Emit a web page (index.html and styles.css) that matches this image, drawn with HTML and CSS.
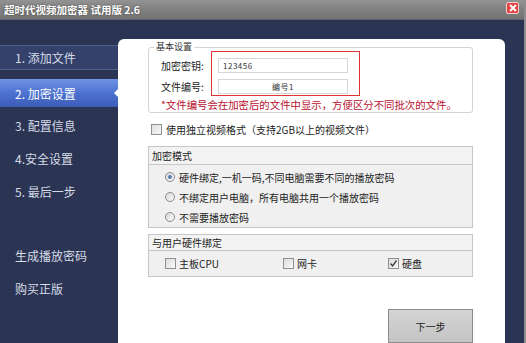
FILE: index.html
```html
<!DOCTYPE html>
<html>
  <head>
    <meta charset="utf-8" />
    <title>超时代视频加密器 试用版 2.6</title>
    <link rel="stylesheet" href="styles.css">
  </head>
  <body>
    <div class="window">
      <div class="titlebar">
        <span class="title">超时代视频加密器 试用版 2.6</span>
        <span class="close">
          <svg width="8" height="8" viewBox="0 0 8 8">
            <path d="M1 1 L7 7 M7 1 L1 7" stroke="#fff" stroke-width="2" />
          </svg>
        </span>
      </div>

      <div class="main">
        <div class="sidebar">
          <div class="nav-item band">1. 添加文件</div>
          <div class="nav-item active">2. 加密设置</div>
          <div class="nav-item step">3. 配置信息</div>
          <div class="nav-item step">4.安全设置</div>
          <div class="nav-item step">5. 最后一步</div>
          <div class="nav-item extra">生成播放密码</div>
          <div class="nav-item extra">购买正版</div>
        </div>

        <div class="panel">
          <div class="content">
            <div class="basic">
              <span class="legend">基本设置</span>
              <div class="key-row">
                <div class="labels">
                  <span>加密密钥:</span>
                  <span>文件编号:</span>
                </div>
                <div class="redbox">
                  <div class="field">123456</div>
                  <div class="field center">编号1</div>
                </div>
              </div>
              <div class="note">*文件编号会在加密后的文件中显示，方便区分不同批次的文件。</div>
            </div>

            <div class="check-line">
              <span class="checkbox"></span>
              <span>使用独立视频格式（支持2GB以上的视频文件）</span>
            </div>

            <div class="group mode">
              <div class="group-head">加密模式</div>
              <div class="group-body">
                <div class="radio-row"><span class="radio on"></span>硬件绑定,一机一码,不同电脑需要不同的播放密码</div>
                <div class="radio-row"><span class="radio"></span>不绑定用户电脑，所有电脑共用一个播放密码</div>
                <div class="radio-row"><span class="radio"></span>不需要播放密码</div>
              </div>
            </div>

            <div class="group bind">
              <div class="group-head">与用户硬件绑定</div>
              <div class="group-body hw">
                <div class="hw-item"><span class="checkbox"></span>主板CPU</div>
                <div class="hw-item"><span class="checkbox"></span>网卡</div>
                <div class="hw-item">
                  <span class="checkbox">
                    <svg width="9" height="9" viewBox="0 0 9 9">
                      <path d="M1.5 4.5 L3.6 7 L7.5 1.5" fill="none" stroke="#3a3a3a" stroke-width="1.3" />
                    </svg>
                  </span>硬盘
                </div>
              </div>
            </div>

            <button class="next-button">下一步</button>
          </div>
        </div>
      </div>
    </div>
  </body>
</html>
```

FILE: styles.css
```css
body {
  margin: 0;
  width: 526px;
  height: 343px;
  overflow: hidden;
  font-family: "Noto Sans CJK SC", "Noto Sans", sans-serif;
  background-color: #2b3553;
}
.window {
  display: flex;
  flex-direction: column;
  height: 343px;
  border-right: 2px solid #8e8e8e;
}
.titlebar {
  display: flex;
  justify-content: space-between;
  align-items: center;
  height: 22px;
  padding: 0 5px 0 4px;
  background-image: linear-gradient(to bottom, #939393 0%, #7d7d7d 60%, #747474 100%);
  border-bottom: 1px solid #5e6270;
}
.title {
  color: #fff;
  font-size: 10.5px;
  font-weight: bold;
  text-shadow: 0 0 2px rgba(0, 0, 0, 0.5);
}
.close {
  display: flex;
  flex: none;
  align-items: center;
  justify-content: center;
  width: 11px;
  height: 10px;
  margin-top: -3px;
  background-color: #e24444;
  border: 1px solid #f8d0d0;
  border-radius: 2px;
}
.main {
  display: flex;
  flex: 1;
}
.sidebar {
  display: flex;
  flex-direction: column;
  width: 118px;
  padding-top: 25px;
}
.nav-item {
  display: flex;
  align-items: center;
  padding-left: 15px;
  color: #d6dbe8;
  font-size: 12px;
  white-space: nowrap;
}
.band {
  height: 23px;
  background-color: #34416a;
  border-top: 1px solid #4f5f8c;
  border-bottom: 1px solid #4f5f8c;
}
.active {
  position: relative;
  height: 28px;
  margin-top: 9px;
  color: #fff;
  background-image: linear-gradient(to bottom, #6f93e4 0%, #4d72d0 50%, #3c5cb8 100%);
}
.active:after {
  content: "";
  position: absolute;
  right: 0;
  top: 10px;
  border-top: 4px solid transparent;
  border-bottom: 4px solid transparent;
  border-right: 4px solid #fff;
}
.step {
  height: 33px;
}
.step:nth-child(3) {
  margin-top: 2px;
}
.extra {
  height: 33px;
}
.extra:nth-child(6) {
  margin-top: 31px;
}
.panel {
  width: 387px;
  margin-top: 19px;
  background-color: #fff;
  border-radius: 6px 6px 0 0;
}
.content {
  display: flex;
  flex-direction: column;
  width: 325px;
  padding-left: 30px;
  font-size: 10px;
  color: #222;
}
.basic {
  position: relative;
  margin-top: 8px;
  padding: 3px 0 0 12px;
  border: 1px solid #d4d4d4;
  border-radius: 3px;
}
.legend {
  position: absolute;
  left: 5px;
  top: -7px;
  padding: 0 2px;
  background-color: #fff;
  font-size: 9px;
  line-height: 12px;
  color: #333;
}
.key-row {
  display: flex;
}
.labels {
  display: flex;
  flex-direction: column;
  gap: 6px;
  width: 50px;
  padding-top: 7px;
  font-size: 10px;
}
.labels span {
  height: 15px;
  line-height: 15px;
  white-space: nowrap;
}
.redbox {
  display: flex;
  flex-direction: column;
  gap: 6px;
  padding: 6px 11px 1px 6px;
  border: 1px solid #e03434;
}
.field {
  width: 124px;
  height: 13px;
  padding-left: 4px;
  border: 1px solid #d6d6d6;
  font-size: 8px;
  line-height: 13px;
  color: #333;
  letter-spacing: 0.5px;
}
.center {
  text-align: center;
  padding-left: 0;
  width: 128px;
}
.note {
  margin-top: 2px;
  height: 14px;
  line-height: 14px;
  font-size: 10.4px;
  color: #b8102e;
  white-space: nowrap;
}
.check-line {
  display: flex;
  align-items: center;
  gap: 4px;
  height: 14px;
  margin-top: 9px;
  padding-left: 3px;
  white-space: nowrap;
}
.checkbox {
  display: flex;
  align-items: center;
  justify-content: center;
  width: 9px;
  height: 9px;
  border: 1px solid #8f8f8f;
  background-image: linear-gradient(135deg, #dedede 0%, #f8f8f8 100%);
}
.group {
  display: flex;
  flex-direction: column;
  background-color: #f0f0f0;
  border: 1px solid #c6c6c6;
}
.mode {
  margin-top: 10px;
}
.bind {
  margin-top: 6px;
}
.group-head {
  height: 17px;
  line-height: 17px;
  padding-left: 3px;
  border-bottom: 1px solid #c6c6c6;
  background-color: #f3f3f3;
}
.bind .group-head {
  height: 15px;
  line-height: 15px;
}
.group-body {
  padding: 2px 0 0 16px;
}
.radio-row {
  display: flex;
  align-items: center;
  gap: 4px;
  height: 20px;
  white-space: nowrap;
}
.radio {
  position: relative;
  width: 8px;
  height: 8px;
  border: 1px solid #8a8a8a;
  border-radius: 50%;
  background-image: linear-gradient(135deg, #d8d8d8 0%, #fbfbfb 100%);
}
.radio.on:after {
  content: "";
  position: absolute;
  left: 2px;
  top: 2px;
  width: 4px;
  height: 4px;
  border-radius: 50%;
  background-color: #5a7fb0;
}
.hw {
  display: grid;
  grid-template-columns: 118px 105px 1fr;
  align-items: center;
  height: 25px;
  padding-top: 0;
}
.hw-item {
  display: flex;
  align-items: center;
  gap: 3px;
}
.next-button {
  align-self: flex-end;
  width: 85px;
  height: 34px;
  margin-top: 32px;
  border: 1px solid #8c8c8c;
  background-image: linear-gradient(to bottom, #d4d4d4 0%, #c4c4c4 100%);
  font-family: "Noto Sans CJK SC", sans-serif;
  font-size: 10px;
  color: #222;
}
```
